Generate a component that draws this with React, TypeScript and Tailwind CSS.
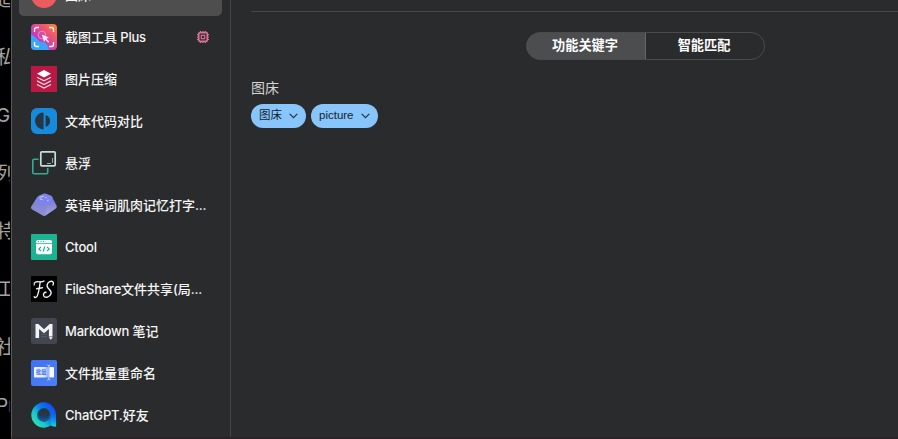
import type { ReactNode } from 'react';

const backgroundLines = ['追', '私', 'G', '列', '特', '工', '社', 'Pr'];

function ImageHostIcon() {
  return (
    <svg viewBox="0 0 26 26" className="size-[26px]">
      <circle cx="13" cy="13" r="13" fill="#eb5b60" />
    </svg>
  );
}

function CaptureIcon() {
  return (
    <svg viewBox="0 0 26 26" className="size-[26px]">
      <defs>
        <linearGradient id="cap" x1="1" y1="0" x2="0.1" y2="0.9">
          <stop offset="0" stopColor="#ff8a2c" />
          <stop offset="0.35" stopColor="#ee5570" />
          <stop offset="0.75" stopColor="#c039c4" />
          <stop offset="1" stopColor="#8a50e8" />
        </linearGradient>
        <clipPath id="capClip">
          <rect width="26" height="26" rx="4" />
        </clipPath>
      </defs>
      <g clipPath="url(#capClip)">
        <rect width="26" height="26" fill="url(#cap)" />
        <path d="M0 10.500C5 12 7 18 11 18c4 0 6 3 7 8H0Z" fill="#3aa5fa" />
      </g>
      <path d="M3.500 8V5.500a2 2 0 0 1 2-2H8M18 3.500h2.500a2 2 0 0 1 2 2V8M22.500 18v2.500a2 2 0 0 1-2 2H18M8 22.500H5.500a2 2 0 0 1-2-2V18" fill="none" stroke="#fff" strokeWidth="1.300" />
      <circle cx="11" cy="11" r="3.800" fill="none" stroke="#f4c8e6" strokeWidth=".8" opacity=".7" />
      <path d="M10.800 10.600l7.200 2.800-2.600 1.300 2.900 2.900-1.100 1.100-2.900-2.900-1.300 2.300Z" fill="#fbeaf6" />
    </svg>
  );
}

function LayersIcon() {
  return (
    <svg viewBox="0 0 26 26" className="size-[26px]">
      <rect width="26" height="26" fill="#b91944" />
      <path d="M13 4l7 3.700-7 3.700-7-3.700Z" fill="#fff" />
      <path d="M6 11.300l7 3.600 7-3.600M6 14.900l7 3.600 7-3.600M6 18.500l7 3.600 7-3.600" fill="none" stroke="#f6d9e0" strokeWidth="1.250" />
    </svg>
  );
}

function DiffIcon() {
  return (
    <svg viewBox="0 0 26 26" className="size-[26px]">
      <rect width="26" height="26" rx="6" fill="#168bdc" />
      <path d="M12.600 4.500v17a8.500 7.600 0 0 1 0-17Z" transform="translate(1.200 0) scale(.9 1)" fill="#253645" />
      <path d="M14.600 7.200a6 6 0 0 1 0 11.600Z" fill="#253645" />
    </svg>
  );
}

function FloatIcon() {
  return (
    <svg viewBox="0 0 26 26" className="size-[26px]" fill="none">
      <path d="M7.500 9.200H3a1.200 1.200 0 0 0-1.200 1.200V22.500A1.200 1.200 0 0 0 3 23.700h12.500a1.200 1.200 0 0 0 1.200-1.200v-4.500" stroke="#2eae96" strokeWidth="1.600" />
      <rect x="9.800" y="1.800" width="14.400" height="14" rx="1" stroke="#c3dedb" strokeWidth="1.700" />
      <path d="M21.500 8v5.500H16" stroke="#9eb6b5" strokeWidth=".9" strokeDasharray="5 2" />
    </svg>
  );
}

function KeycapIcon() {
  return (
    <svg viewBox="0 0 26 26" className="size-[26px]">
      <defs>
        <linearGradient id="keySide" x1="0" y1="0" x2="0" y2="1">
          <stop offset="0" stopColor="#686bd0" />
          <stop offset="1" stopColor="#a3a6da" />
        </linearGradient>
      </defs>
      <path d="M6.500 4.500L12 2q1.500-.5 3 0L21 4.500 25.700 14q.4 2-1.400 3L15 23.300q-1.500.9-3 .2L1 17.300Q-.3 16.300.3 14.500Z" fill="url(#keySide)" />
      <path d="M3.800 10.500L15.500 13 14.500 23.500q-1.200.5-2.500 0L1 17.300Q0 16.300.5 14.800Z" fill="#8386d3" opacity=".7" />
      <path d="M7.600 4L11.800 2q1.500-.7 3.100-.2l5.300 2q1.600.7 1.100 2.400l-2.700 5.500q-.8 1.500-2.600 1.200L5.200 11Q3.500 10.500 4.200 9Z" fill="#7e83ef" />
      <path d="M12.800 4.600q-3.500-.5-4 1.200-.2 1.700 2.700 1.900M14 5.500l1.600.3M16 8.800l1.700-.7" fill="none" stroke="#c9cdf8" strokeWidth="1" />
    </svg>
  );
}

function CtoolIcon() {
  return (
    <svg viewBox="0 0 26 26" className="size-[26px]">
      <rect width="26" height="26" rx="1" fill="#1cb392" />
      <path d="M5 9.200V7.800A1.800 1.800 0 0 1 6.800 6h12.400A1.800 1.800 0 0 1 21 7.800V9.200Z" fill="#fff" />
      <path d="M5 10h16v8.500a1.800 1.800 0 0 1-1.800 1.800H6.800A1.800 1.800 0 0 1 5 18.500Z" fill="#fff" />
      <path d="M7 7.500h1M9.500 7.500h1M12 7.500h1" stroke="#1cb392" strokeWidth="1" />
      <path d="M10 12.800L7.800 15l2.200 2.200M16 12.800l2.200 2.200-2.200 2.200M13.800 12.500l-1.600 5" fill="none" stroke="#1cb392" strokeWidth="1.200" />
    </svg>
  );
}

function FileShareIcon() {
  return (
    <svg viewBox="0 0 26 26" className="size-[26px]" fill="none" stroke="#f4f4f4" strokeLinecap="round">
      <rect width="26" height="26" fill="#000" stroke="none" />
      <path d="M3.200 9C2.500 6 5.500 5.500 8 5.800c2 .1 3.800.3 5-.8" strokeWidth="1.200" />
      <path d="M9.200 6C8.500 10.500 8 16 6.200 20c-.7 1.600-2.500 2-3 .7M5.500 12.800c2-.9 3.800-.2 6-1.100" strokeWidth="1.300" />
      <path d="M22 9c1.500-3-.8-4.600-3.300-3.300-2.700 1.400-3.500 4.400-1.500 6.500 1.600 1.700 3.800 3.200 2.700 5.800-1.300 3.100-5.700 4.400-7.100 2-.9-1.800.4-3.800 2.200-3.700" strokeWidth="1.400" />
    </svg>
  );
}

function MarkdownIcon() {
  return (
    <svg viewBox="0 0 26 26" className="size-[26px]">
      <rect width="26" height="26" rx="2.500" fill="#414650" />
      <path d="M10 13.800h6M10 16.300h6M10 18.700h6" stroke="#59606b" strokeWidth="1" />
      <path d="M4.500 20V6h2.800L13 11.300 18.700 6h2.800v12.500h-3.600V11L13 15.300 8.100 11v9Z" fill="#f2f2f2" />
      <path d="M17.800 19.300h4L19.800 21.700Z" fill="#fff" />
    </svg>
  );
}

function RenameIcon() {
  return (
    <svg viewBox="0 0 26 26" className="size-[26px]">
      <defs>
        <linearGradient id="ren" x1="0" y1="0" x2="1" y2="1">
          <stop offset="0" stopColor="#3f70f3" />
          <stop offset="1" stopColor="#4b82f7" />
        </linearGradient>
        <linearGradient id="renField" x1="0" y1="0" x2="1" y2="0">
          <stop offset="0" stopColor="#f4f7ff" />
          <stop offset=".7" stopColor="#dfe8ff" />
          <stop offset="1" stopColor="#8badfa" />
        </linearGradient>
      </defs>
      <rect width="26" height="26" rx="2" fill="url(#ren)" />
      <rect x="3" y="7" width="14.200" height="10.500" rx="1" fill="url(#renField)" />
      <rect x="18.300" y="7" width="4.700" height="10.500" rx=".8" fill="#f7f9ff" />
      <path d="M16.300 5l1.500.6 1.500-.6M17.800 5.600v13.800M16.300 20l1.500-.6 1.500.6" fill="none" stroke="#dce6ff" strokeWidth=".8" />
      <text x="4.700" y="14.200" fontSize="5.300" fontWeight="700" fill="#3d70ef" fontFamily="Noto Sans CJK SC, sans-serif">批量</text>
    </svg>
  );
}

function ChatIcon() {
  return (
    <svg viewBox="0 0 26 26" className="size-[26px]">
      <defs>
        <linearGradient id="chat" x1=".9" y1=".15" x2=".1" y2=".85">
          <stop offset="0" stopColor="#1448ef" />
          <stop offset=".42" stopColor="#087ef2" />
          <stop offset=".7" stopColor="#18c6cb" />
          <stop offset="1" stopColor="#32dfae" />
        </linearGradient>
        <linearGradient id="chatTail" x1="0" y1="0" x2="0" y2="1">
          <stop offset="0" stopColor="#078fef" stopOpacity="0" />
          <stop offset="1" stopColor="#25d3c5" />
        </linearGradient>
        <linearGradient id="chatHole" x1="0" y1="0" x2="0" y2="1">
          <stop offset="0" stopColor="#29333c" />
          <stop offset=".6" stopColor="#263646" />
          <stop offset="1" stopColor="#154b92" />
        </linearGradient>
      </defs>
      <path d="M13 .3a12.700 12.700 0 1 0 7 23.300c1.300 1 3.500 1.200 5 .8V13A12.600 12.600 0 0 0 13 .3Z" fill="url(#chat)" />
      <path d="M19.500 12h5.600v12.300c-2.200.6-4.200-.2-5-1.500Z" fill="url(#chatTail)" />
      <circle cx="13" cy="12.900" r="7" fill="#125a9d" />
      <circle cx="13" cy="12" r="5.700" fill="url(#chatHole)" />
    </svg>
  );
}

function ChipIcon() {
  return (
    <svg viewBox="0 0 12 12" className="size-3 shrink-0" fill="none" stroke="#dc7297">
      <rect x="1.700" y="1.700" width="8.600" height="8.600" rx="1.200" strokeWidth="1.700" />
      <rect x="4.300" y="4.300" width="3.400" height="3.400" strokeWidth="1.200" />
      <path d="M3.500 0v1M6 0v1M8.500 0v1M3.500 11v1M6 11v1M8.500 11v1M0 3.500h1M0 6h1M0 8.500h1M11 3.500h1M11 6h1M11 8.500h1" strokeWidth="1.200" />
    </svg>
  );
}

type Plugin = { name: string; icon: ReactNode; selected?: boolean; badge?: boolean };

const plugins: Plugin[] = [
  { name: '图床', icon: <ImageHostIcon />, selected: true },
  { name: '截图工具 Plus', icon: <CaptureIcon />, badge: true },
  { name: '图片压缩', icon: <LayersIcon /> },
  { name: '文本代码对比', icon: <DiffIcon /> },
  { name: '悬浮', icon: <FloatIcon /> },
  { name: '英语单词肌肉记忆打字...', icon: <KeycapIcon /> },
  { name: 'Ctool', icon: <CtoolIcon /> },
  { name: 'FileShare文件共享(局...', icon: <FileShareIcon /> },
  { name: 'Markdown 笔记', icon: <MarkdownIcon /> },
  { name: '文件批量重命名', icon: <RenameIcon /> },
  { name: 'ChatGPT.好友', icon: <ChatIcon /> },
];

// Splits a label so that Latin runs can be tracked tighter than the Chinese ones.
function Label({ text }: { text: string }) {
  return (
    <>
      {text.split(/([\x20-\x7e]+)/).map((run, i) => (
        <span key={i} className={i % 2 ? 'tracking-[-0.2px]' : ''}>{run}</span>
      ))}
    </>
  );
}

function Keyword({ children }: { children: ReactNode }) {
  return (
    <button className="flex h-6 items-center gap-[7px] rounded-full bg-[#87c5fb] px-2 font-['Liberation_Sans','Noto_Sans_CJK_SC',sans-serif] text-[11.5px] text-[#18232d]">
      <span>{children}</span>
      <svg viewBox="0 0 9 6" className="h-1.5 w-[9px]" fill="none" stroke="#233443" strokeWidth="1.200">
        <path d="M.7.8L4.500 4.600 8.300.8" />
      </svg>
    </button>
  );
}

export default function App() {
  return (
    <div className="flex h-[439px] w-[898px] overflow-hidden bg-black font-['Inter','Noto_Sans_CJK_SC',sans-serif]">
      <div className="-mt-[29px] mr-px w-[10px] shrink-0 overflow-hidden text-[19px] text-[#a3a3a3]">
        {backgroundLines.map((line) => (
          <div key={line} className="-ml-[4px] flex h-[58px] items-center whitespace-nowrap">{line}</div>
        ))}
      </div>
      <div className="flex min-w-0 flex-1 border-b-2 border-l border-b-[#2b2427] border-l-[#58595a] bg-[#2a2b2d]">
        <aside className="-mt-[26px] h-[463px] w-[219px] shrink-0 overflow-hidden border-r border-[#454648] pr-2 pl-[7px]">
          {plugins.map((plugin) => (
            <div
              key={plugin.name}
              className={`flex h-[42px] items-center gap-2 rounded-[5px] pr-[13px] pl-3 ${plugin.selected ? 'bg-[#4e4e4e]' : ''}`}
            >
              {plugin.icon}
              <span className="flex-1 text-[13px] leading-5 font-medium whitespace-pre text-[#f5f5f5]">
                <Label text={plugin.name} />
              </span>
              {plugin.badge && <ChipIcon />}
            </div>
          ))}
        </aside>
        <main className="min-w-0 flex-1 pl-5">
          <div className="h-3 border-b border-[#454648]" />
          <div className="mt-5 ml-[275px] flex h-7 w-[239px] overflow-hidden rounded-full border border-[#4a4b4d] text-[13.200px] font-bold text-white">
            <button className="-my-px -ml-px w-[120px] rounded-l-full border border-[#666768] bg-[#4c4d4f] pr-0.5">功能关键字</button>
            <button className="flex-1 pr-0.5">智能匹配</button>
          </div>
          <h2 className="mt-[18px] text-[14px] leading-5 text-[#d5d5d5]">图床</h2>
          <div className="mt-1.5 flex gap-[5px]">
            <Keyword>图床</Keyword>
            <Keyword>picture</Keyword>
          </div>
        </main>
      </div>
    </div>
  );
}
